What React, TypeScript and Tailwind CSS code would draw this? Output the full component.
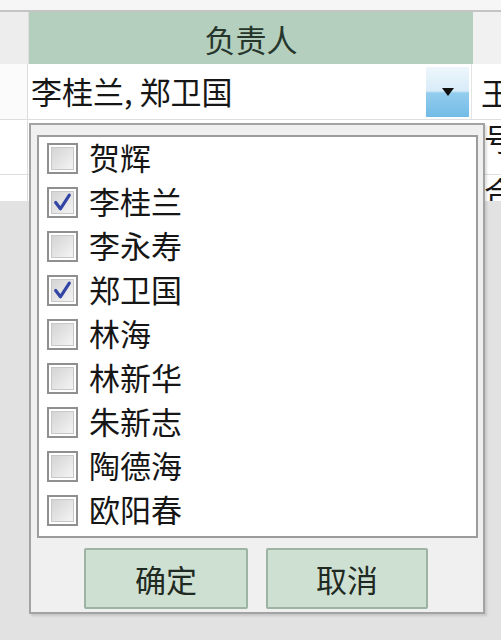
import React from 'react';

const people = [
  { name: '贺辉', checked: false },
  { name: '李桂兰', checked: true },
  { name: '李永寿', checked: false },
  { name: '郑卫国', checked: true },
  { name: '林海', checked: false },
  { name: '林新华', checked: false },
  { name: '朱新志', checked: false },
  { name: '陶德海', checked: false },
  { name: '欧阳春', checked: false },
];

const Check = ({ checked }: { checked: boolean }) => (
  <div className="w-[31px] h-[31px] border-2 border-[#8f8f8f] bg-white p-[2px] shrink-0">
    <div className="relative w-full h-full bg-[linear-gradient(135deg,#d4d4d4,#f4f4f4)] border border-[#c8c8c8]">
      {checked ? (
        <svg viewBox="0 0 20 20" className="absolute inset-0 w-full h-full">
          <path d="M3.5 10 L8 16 L16.5 3" fill="none" stroke="#3346a6" strokeWidth="3" strokeLinecap="round" strokeLinejoin="round" />
        </svg>
      ) : null}
    </div>
  </div>
);

export default function App() {
  return (
    <div className="relative w-[501px] h-[640px] overflow-hidden bg-[#e2e2e2] font-['Noto_Sans_CJK_SC','Noto_Sans',sans-serif] text-[#161616]">
      {/* grid */}
      <div className="h-[12px] bg-[#f6f6f6] border-b-2 border-[#c4c4c4]" />
      <div className="flex h-[52px]">
        <div className="w-[29px] bg-[#ededed] border-r border-[#dcdcdc]" />
        <div className="w-[444px] bg-[#b4cfbe] flex items-center justify-center text-[31px] text-[#26362c] leading-none">
          负责人
        </div>
        <div className="flex-1 bg-[#f1f1f1]" />
      </div>
      <div className="flex h-[56px] bg-white border-b border-[#dedede]">
        <div className="w-[28px] border-r border-[#dcdcdc] bg-[#fbfbfb]" />
        <div className="w-[444px] flex items-center pl-[3px] pr-[2px] border-r border-[#e4e4e4]">
          <div className="flex-1 text-[31px] leading-none pb-[2px]">李桂兰, 郑卫国</div>
          <div className="w-[43px] h-[50px] flex items-center justify-center bg-[linear-gradient(180deg,#eef6fc_0%,#d7ecf8_48%,#93cdee_52%,#72bbe6_100%)]">
            <svg width="12" height="8" viewBox="0 0 12 8">
              <path d="M0 0 H12 L6 8 Z" fill="#111" />
            </svg>
          </div>
        </div>
        <div className="flex-1 overflow-hidden pl-[9px] flex items-center text-[31px] leading-none whitespace-nowrap">王</div>
      </div>
      <div className="flex h-[55px] bg-white border-b border-[#dedede]">
        <div className="w-[28px] border-r border-[#dcdcdc]" />
        <div className="w-[456px]" />
        <div className="flex-1 overflow-hidden pt-[2px] text-[31px] leading-none whitespace-nowrap">号</div>
      </div>
      <div className="flex h-[26px] bg-white">
        <div className="w-[28px] border-r border-[#dcdcdc]" />
        <div className="w-[456px]" />
        <div className="flex-1 overflow-hidden text-[31px] leading-none whitespace-nowrap">合</div>
      </div>

      {/* dropdown popup */}
      <div className="absolute left-[29px] top-[123px] w-[456px] h-[491px] bg-[#f0f0f0] border-2 border-[#a3a3a3] shadow-[2px_2px_2px_rgba(0,0,0,0.12)] flex flex-col">
        <div className="ml-[6px] mt-[10px] w-[441px] h-[403px] bg-white border-2 border-[#9c9c9c] pl-[8px]">
          {people.map((p) => (
            <div key={p.name} className="flex items-center h-[43.9px] gap-[11px]">
              <Check checked={p.checked} />
              <span className="text-[31px] leading-none pb-[4px]">{p.name}</span>
            </div>
          ))}
        </div>
        <div className="flex justify-center gap-[18px] mt-[10px] pr-[2px]">
          <button className="w-[164px] h-[61px] bg-[#cee0d2] border-2 border-[#9db3a3] rounded-[2px] text-[31px] text-[#1f2a22] leading-none">
            确定
          </button>
          <button className="w-[162px] h-[61px] bg-[#cee0d2] border-2 border-[#9db3a3] rounded-[2px] text-[31px] text-[#1f2a22] leading-none">
            取消
          </button>
        </div>
      </div>
    </div>
  );
}
